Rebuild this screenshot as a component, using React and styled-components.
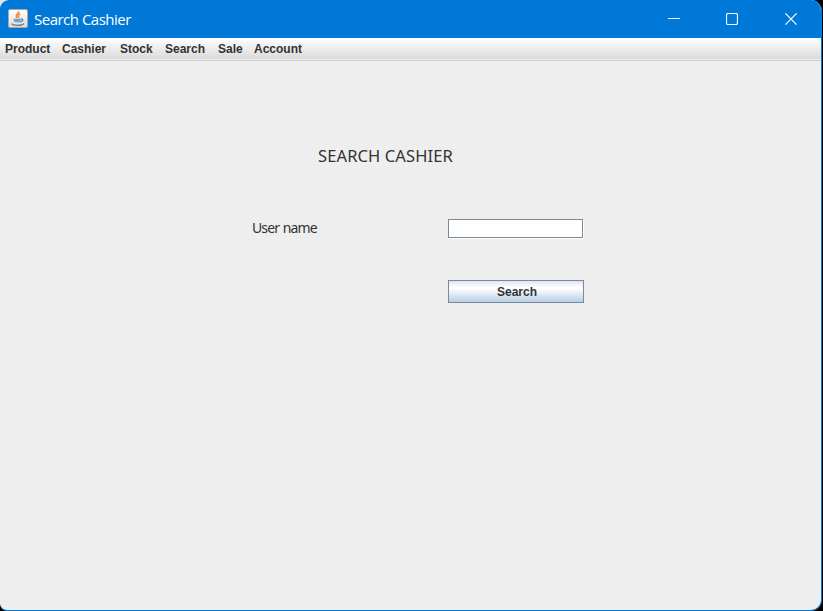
import React from "react";
import styled, { createGlobalStyle } from "styled-components";

const GlobalStyle = createGlobalStyle`
  body {
    margin: 0;
    background: linear-gradient(#dfe3e8, #dfe3e8) 0 0 / 12px 12px no-repeat, #000;
    overflow: hidden;
  }
`;

const Window = styled.div`
  box-sizing: border-box;
  width: 822px;
  height: 611px;
  display: flex;
  flex-direction: column;
  border: solid #0078d7;
  border-width: 0 1px 1px 0;
  border-radius: 9px 11px 11px 7px;
  overflow: hidden;
  background: #eee;
  color: #333;
`;

const TitleBar = styled.header`
  display: flex;
  align-items: center;
  flex: 0 0 38px;
  box-sizing: border-box;
  padding-left: 8px;
  background: #0078d7;
  color: #fff;
`;

const JavaIcon = styled.svg`
  width: 20px;
  height: 20px;
`;

const Title = styled.span`
  flex: 1;
  margin-left: 6px;
  font: 15px/20px "Open Sans", sans-serif;
  letter-spacing: -0.5px;
  white-space: nowrap;
`;

const Controls = styled.div`
  display: flex;
  height: 38px;
`;

const ControlButton = styled.button`
  width: ${(p) => p.$width}px;
  height: 38px;
  padding: 0;
  border: 0;
  background: none;
  color: #fff;
  svg { display: block; margin: 0 auto; }
`;

const MenuBar = styled.nav`
  box-sizing: border-box;
  display: flex;
  flex: 0 0 23px;
  padding-left: 5px;
  border-bottom: 1px solid #ccc;
  background: linear-gradient(#fff, #dadada 21px, #eee 21px);
`;

const MenuItem = styled.span`
  width: ${(p) => p.$width}px;
  font: bold 12px/22px "Liberation Sans", Arial, sans-serif;
  white-space: nowrap;
`;

const Content = styled.main`
  display: flex;
  flex-direction: column;
  padding: 83px 0 0 252px;
`;

const Heading = styled.h1`
  margin: 0 0 0 66px;
  font: 16.5px/24px "Noto Sans", sans-serif;
  letter-spacing: 0.12px;
  white-space: nowrap;
`;

const Form = styled.form`
  display: grid;
  grid-template-columns: 196px 136px;
  grid-template-rows: 20px 23px;
  row-gap: 41px;
  margin-top: 51px;
`;

const Label = styled.label`
  font: 14px/17px "Noto Sans", sans-serif;
  letter-spacing: -0.9px;
  word-spacing: 1px;
  white-space: nowrap;
`;

const TextField = styled.input`
  box-sizing: border-box;
  width: 135px;
  height: 19px;
  padding: 0 2px;
  border: 1px solid #7a8a99;
  border-radius: 0;
  outline: 0;
  background: #fff;
  box-shadow: 1px 1px 0 #fff;
`;

const SearchButton = styled.button`
  box-sizing: border-box;
  grid-column: 2;
  width: 136px;
  height: 23px;
  padding: 1px 0 0 2px;
  border: 1px solid #7a8a99;
  border-radius: 0;
  background: linear-gradient(#dfe4f5, #fff 30%, #fff 35%, #b8cfe5);
  color: #333;
  font: bold 12px/20px "Liberation Sans", Arial, sans-serif;
`;

const menus = [
  ["Product", 57],
  ["Cashier", 58],
  ["Stock", 45],
  ["Search", 53],
  ["Sale", 36],
  ["Account", 50],
];

export default function App() {
  return (
    <>
      <GlobalStyle />
      <Window>
        <TitleBar>
          <JavaIcon viewBox="0 0 20 20">
            <defs>
              <linearGradient id="tile" x2="0" y2="1">
                <stop stopColor="#fff" />
                <stop offset="1" stopColor="#dcdcdc" />
              </linearGradient>
            </defs>
            <rect x=".5" y=".5" width="19" height="18" rx="1.5" fill="url(#tile)" stroke="#a9aaa5" />
            <path d="M10.3 2.3c1.6 2.5-4 3-1.4 6.7M12.3 4.6c-3.6 2-.9 2.3-2 4.6" fill="none" stroke="#e98a43" strokeWidth="1.6" />
            <path d="M5.2 9.8h7.6l-1 3.4H6.6z" fill="#7f9fb7" />
            <path d="M12.7 10.2c3.6-.5 2.3 2.3-.6 2.6M3.6 14.7c1.5 2.2 10.5 2.2 12.5-.2" fill="none" stroke="#5682a3" strokeWidth="1.2" />
          </JavaIcon>
          <Title>Search Cashier</Title>
          <Controls>
            <ControlButton $width={57} aria-label="Minimize">
              <svg width="12" height="12"><path d="M0 5.5h12" stroke="currentColor" /></svg>
            </ControlButton>
            <ControlButton $width={59} aria-label="Maximize">
              <svg width="12" height="12"><rect x=".5" y=".5" width="11" height="11" rx="1.5" fill="none" stroke="currentColor" strokeWidth="1.2" /></svg>
            </ControlButton>
            <ControlButton $width={60} aria-label="Close">
              <svg width="12" height="12"><path d="M.4.4l11.2 11.2M11.6.4L.4 11.6" stroke="currentColor" strokeWidth="1.2" /></svg>
            </ControlButton>
          </Controls>
        </TitleBar>
        <MenuBar>
          {menus.map(([name, width]) => (
            <MenuItem key={name} $width={width}>{name}</MenuItem>
          ))}
        </MenuBar>
        <Content>
          <Heading>SEARCH CASHIER</Heading>
          <Form>
            <Label htmlFor="username">User name</Label>
            <TextField id="username" />
            <SearchButton type="button">Search</SearchButton>
          </Form>
        </Content>
      </Window>
    </>
  );
}
